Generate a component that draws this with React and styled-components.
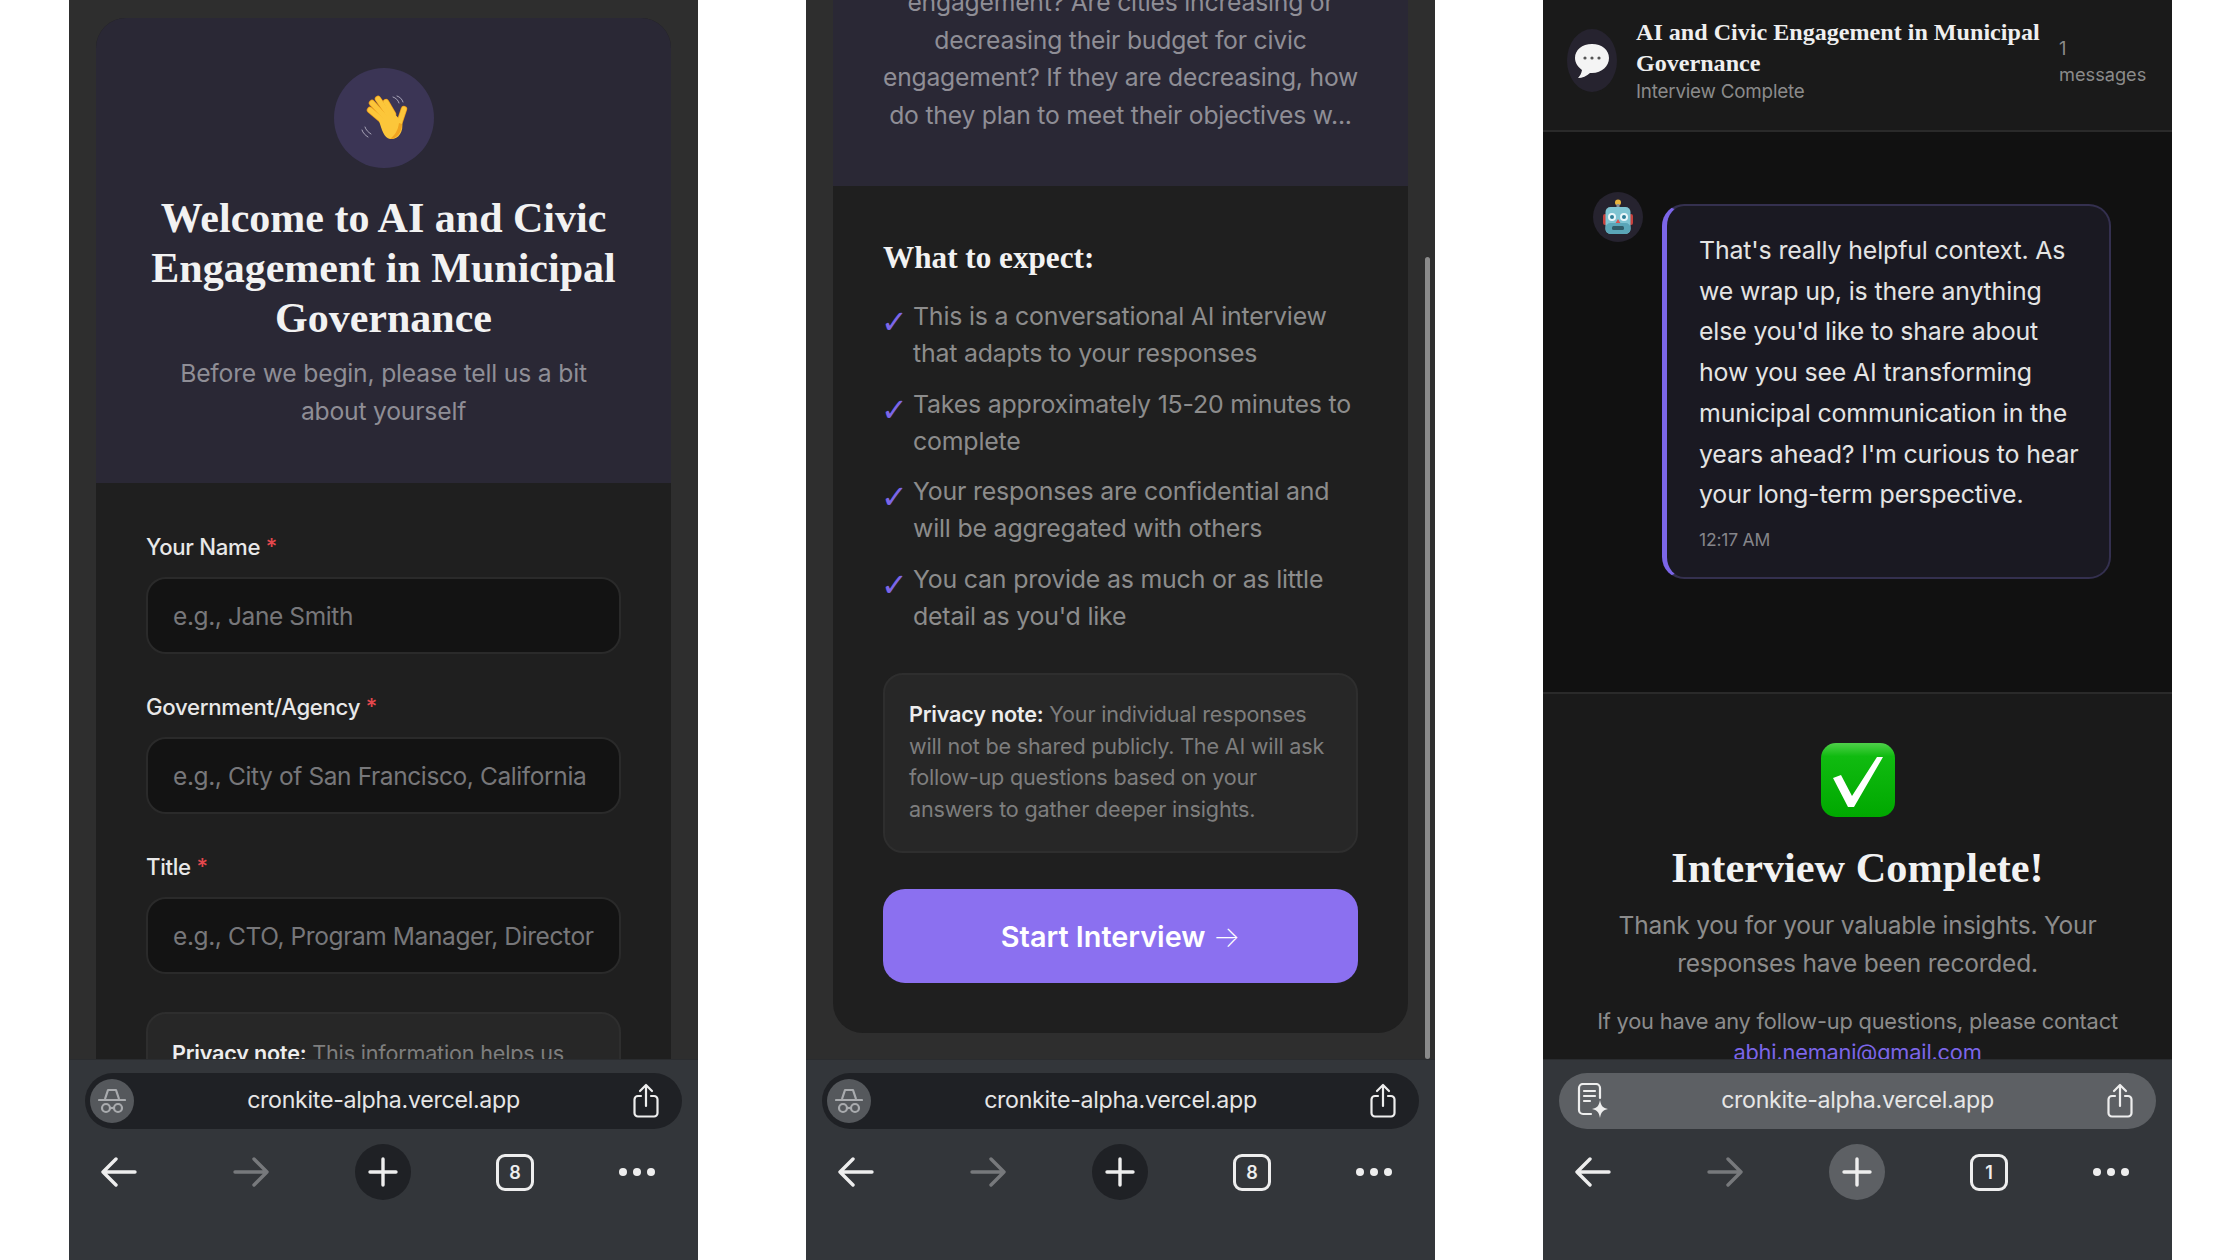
import React from 'react'
import styled, { createGlobalStyle } from 'styled-components'

const GlobalStyle = createGlobalStyle`
html, body {
  margin: 0;
  padding: 0;
  background: #ffffff;
}
* {
  box-sizing: border-box;
}
`

const sans = `Inter, "Noto Sans", sans-serif`
const serif = `"Liberation Serif", "DejaVu Serif", serif`

const Page = styled.div`
display: flex;
gap: 108px;
width: 2240px;
height: 1260px;
padding: 0 68px 0 69px;
overflow: hidden;
background: #ffffff;
font-family: ${sans};
`

const Phone = styled.div`
position: relative;
display: flex;
flex-direction: column;
width: 629px;
height: 1260px;
background: #33363a;
`

const Viewport = styled.div`
display: flex;
flex-direction: column;
flex: none;
height: 1059px;
overflow: hidden;
background: ${({ bg }) => bg || '#2e2e2e'};
justify-content: ${({ bottom }) => (bottom ? 'flex-end' : 'flex-start')};
padding: ${({ pad }) => pad || 0};
`

const Card = styled.div`
flex: none;
margin: 0 27px;
border-radius: ${({ openTop }) => (openTop ? '0 0 30px 30px' : '30px 30px 0 0')};
overflow: hidden;
background: #1f1f1f;
`

const CardHead = styled.div`
display: flex;
flex-direction: column;
align-items: center;
padding: ${({ pad }) => pad || '50px 0 53px'};
background: #2a2835;
text-align: center;
`

const WaveCircle = styled.div`
display: flex;
align-items: center;
justify-content: center;
width: 100px;
height: 100px;
margin-bottom: 25px;
padding-left: 4px;
border-radius: 50%;
background: #3b3555;
`

const Heading = styled.h1`
margin: 0 0 12px;
font-family: ${serif};
font-size: 42px;
line-height: 50px;
font-weight: 700;
color: #f2f2f2;
`

const Lead = styled.p`
margin: 0;
font-size: 24.7px;
line-height: 37.5px;
font-weight: 400;
letter-spacing: -0.2px;
color: #8f8e96;
white-space: nowrap;
`

const CardBody = styled.div`
padding: ${({ pad }) => pad || '49px 50px 0'};
`

const Label = styled.label`
display: block;
margin-bottom: 15px;
font-size: 22.2px;
line-height: 30px;
font-weight: 500;
letter-spacing: -0.3px;
color: #e8e8e8;
`

const Required = styled.span`
color: #e5484d;
`

const Field = styled.div`
margin-bottom: 38px;
`

const Input = styled.input`
display: block;
width: 100%;
height: 77px;
padding: 0 25px;
border: 2px solid #2a2a2a;
border-radius: 20px;
background: #131313;
font-family: ${sans};
font-size: 24.5px;
letter-spacing: -0.4px;
color: #e8e8e8;
outline: none;

&::placeholder {
  color: #77777a;
  opacity: 1;
}
`

const Note = styled.div`
padding: 24px 24px 26px;
border: 2px solid #2e2e2e;
border-radius: 20px;
background: #272727;
font-size: 21.6px;
line-height: 31.4px;
letter-spacing: -0.2px;
color: #7e7e7e;
white-space: nowrap;

b {
  font-weight: 600;
  color: #ededed;
}
`

const ExpectTitle = styled.h2`
margin: 0 0 22px;
font-family: ${serif};
font-size: 31.2px;
line-height: 36px;
font-weight: 700;
color: #f2f2f2;
`

const ExpectList = styled.ul`
display: flex;
flex-direction: column;
gap: 13px;
margin: 0 0 38px;
padding: 0;
list-style: none;
`

const ExpectItem = styled.li`
display: flex;
gap: 12px;
font-size: 24.9px;
line-height: 37.3px;
letter-spacing: -0.2px;
color: #8c8c8c;
white-space: nowrap;
`

const Tick = styled.span`
width: 18px;
flex: none;
padding-top: 6px;
margin-left: -2px;
margin-right: 2px;
font-family: "DejaVu Sans", sans-serif;
font-size: 32px;
line-height: 37.3px;
color: #7c66e8;
`

const StartButton = styled.button`
display: block;
width: 100%;
height: 94px;
margin-top: 36px;
border: none;
border-radius: 22px;
background: #8b70f0;
font-family: ${sans};
font-size: 28.8px;
font-weight: 600;
color: #ffffff;
`

const ThinArrow = styled.span`
font-weight: 200;
`

const ScrollThumb = styled.div`
position: absolute;
top: 257px;
left: 619px;
width: 5px;
height: 802px;
border-radius: 3px;
background: #8a8a8a;
`

const ChatHeader = styled.div`
display: flex;
flex: none;
align-items: center;
gap: 19px;
height: 132px;
padding: 0 25px 9px 24px;
border-bottom: 2px solid #2a2a2a;
background: #1a1a1a;
`

const HeaderAvatar = styled.div`
display: flex;
flex: none;
align-items: center;
justify-content: center;
width: 50px;
height: 63px;
border-radius: 50%;
background: #26232f;
`

const HeaderText = styled.div`
flex: 1;
min-width: 0;
`

const ChatTitle = styled.div`
font-family: ${serif};
font-size: 24.1px;
line-height: 31px;
font-weight: 700;
color: #efefef;
white-space: nowrap;
`

const ChatStatus = styled.div`
font-size: 18.8px;
line-height: 26px;
letter-spacing: -0.2px;
color: #8b8b8b;
`

const MessageCount = styled.div`
flex: none;
width: 88px;
font-size: 18.2px;
line-height: 26px;
color: #8b8b8b;
`

const Messages = styled.div`
display: flex;
flex: none;
align-items: flex-start;
gap: 19px;
height: 560px;
padding: 60px 0 0 50px;
background: #111111;
`

const BotAvatar = styled.div`
display: flex;
flex: none;
align-items: center;
justify-content: center;
width: 50px;
height: 50px;
border-radius: 50%;
background: #26232f;
`

const Bubble = styled.div`
width: 449px;
margin-top: 12px;
padding: 24px 18px 24px 32px;
border: 2px solid #34304f;
border-left: 5px solid #7c66e8;
border-radius: 22px;
background: #1a1922;
font-size: 24.9px;
line-height: 40.7px;
letter-spacing: -0.15px;
color: #e4e4e4;
white-space: nowrap;
`

const Time = styled.div`
margin-top: 12px;
font-size: 17.5px;
line-height: 26px;
letter-spacing: -0.2px;
color: #85858a;
`

const Done = styled.div`
display: flex;
flex: none;
flex-direction: column;
align-items: center;
padding-top: 49px;
border-top: 2px solid #2a2a2a;
background: #1a1a1a;
text-align: center;
`

const DoneTitle = styled.h2`
margin: 27px 0 14px;
font-family: ${serif};
font-size: 42.3px;
line-height: 48px;
font-weight: 700;
color: #f2f2f2;
`

const DoneText = styled.p`
margin: 0 0 24px;
font-size: 24.5px;
line-height: 38px;
letter-spacing: -0.2px;
color: #8c8c8c;
white-space: nowrap;
`

const Contact = styled.p`
margin: 0;
font-size: 21.8px;
line-height: 31px;
letter-spacing: -0.2px;
color: #8c8c8c;
white-space: nowrap;
`

const Email = styled.a`
color: #7c66e8;
`

const ChromeBar = styled.div`
display: flex;
flex: 1;
flex-direction: column;
padding: 13px 16px 0;
border-top: 1px solid #2a2c2f;
`

const UrlBar = styled.div`
display: grid;
grid-template-columns: ${({ light }) => (light ? '65px' : '78px')} 1fr 60px;
align-items: center;
height: 56px;
padding: ${({ light }) => (light ? '0 23px 0 18px' : '0 23px 0 5px')};
border-radius: 28px;
background: ${({ light }) => (light ? '#5d6064' : '#1f2125')};

& > :first-child {
  justify-self: start;
}
& > :last-child {
  justify-self: end;
}
`

const UrlText = styled.div`
padding-bottom: 3px;
font-size: 23.2px;
letter-spacing: -0.3px;
text-align: center;
color: #e6e6e6;
`

const Incognito = styled.div`
display: flex;
align-items: center;
justify-content: center;
width: 44px;
height: 44px;
border-radius: 50%;
background: #55585c;
`

const NavRow = styled.div`
display: grid;
grid-template-columns: repeat(4, 132px) 112px;
align-items: center;
justify-items: center;
height: 56px;
margin: 15px 0 0 -32px;
`

const PlusCircle = styled.div`
display: flex;
align-items: center;
justify-content: center;
width: 56px;
height: 56px;
border-radius: 50%;
background: ${({ light }) => (light ? '#5d6064' : '#1f2125')};
`

const TabBox = styled.div`
display: flex;
align-items: center;
justify-content: center;
width: 38px;
height: 37px;
border: 3px solid #eeeeee;
border-radius: 9px;
font-size: 18px;
font-weight: 600;
color: #eeeeee;
`

const HandIcon = () => (
  <svg width="50" height="48" viewBox="0 0 50 48">
    <g stroke="#a8a4b8" strokeWidth="1" fill="none" strokeLinecap="round">
      <path d="M32 3c3 1 5 3 6 6" />
      <path d="M36 2c3 1 5 3 6 6" />
      <path d="M4 33c1 3 3 5 6 7" />
      <path d="M1 36c1 3 3 5 6 7" />
    </g>
    <g stroke="#e8981c" strokeLinecap="round" fill="none">
      <path d="M22 27 L9 16" strokeWidth="6.4" />
      <path d="M24 23 L11 9" strokeWidth="6.4" />
      <path d="M28 21 L17 5" strokeWidth="6.4" />
      <path d="M32 20 L25 8" strokeWidth="6.4" />
      <path d="M38 30 L43 15" strokeWidth="6.4" />
    </g>
    <g stroke="#fcc63a" strokeLinecap="round" fill="none">
      <path d="M22 27 L9 16" strokeWidth="5" />
      <path d="M24 23 L11 9" strokeWidth="5" />
      <path d="M28 21 L17 5" strokeWidth="5" />
      <path d="M32 20 L25 8" strokeWidth="5" />
      <path d="M38 30 L43 15" strokeWidth="5" />
    </g>
    <path d="M18 27 L32 18 L41 28 C43 38 37 46 29 45 C23 44 21 36 18 27 Z" fill="#fcc63a" />
    <path d="M41 30 C41 38 36 45 29 45 C33 42 37 37 38 29 Z" fill="#f0a31f" />
  </svg>
)

const SpeechIcon = () => (
  <svg width="36" height="38" viewBox="0 0 36 38">
    <path d="M18 2C8 2 1 8 1 16c0 5 3 9 7 12-.5 3-2 6-4 8 4 0 9-2 12-5h2c10 0 17-7 17-15S28 2 18 2Z" fill="#f4f4f4" />
    <circle cx="11" cy="16" r="1.6" fill="#555" />
    <circle cx="18" cy="16" r="1.6" fill="#555" />
    <circle cx="25" cy="16" r="1.6" fill="#555" />
  </svg>
)

const RobotIcon = () => (
  <svg width="30" height="36" viewBox="0 0 30 36">
    <circle cx="15" cy="3.5" r="3" fill="#e8b33c" />
    <rect x="13.5" y="5" width="3" height="4" fill="#8a8f96" />
    <rect x="0" y="15" width="4" height="11" rx="2" fill="#c8403c" />
    <rect x="26" y="15" width="4" height="11" rx="2" fill="#c8403c" />
    <rect x="2.5" y="8" width="25" height="27" rx="5" fill="#7fc4d2" />
    <rect x="2.5" y="24" width="25" height="11" rx="5" fill="#5aa6b8" />
    <circle cx="9" cy="18" r="4" fill="#e8f6fa" />
    <circle cx="21" cy="18" r="4" fill="#e8f6fa" />
    <circle cx="9" cy="18" r="2" fill="#2d7e96" />
    <circle cx="21" cy="18" r="2" fill="#2d7e96" />
    <path d="M15 20l2.4 4h-4.8Z" fill="#d9534f" />
    <rect x="9" y="27" width="12" height="4" rx="1.5" fill="#2f5c68" />
  </svg>
)

const CheckBox = () => (
  <svg width="74" height="74" viewBox="0 0 74 74">
    <defs>
      <linearGradient id="greenBox" x1="0" y1="0" x2="0" y2="1">
        <stop offset="0" stopColor="#4fd04a" />
        <stop offset="0.18" stopColor="#10bb10" />
        <stop offset="1" stopColor="#00a800" />
      </linearGradient>
    </defs>
    <rect width="74" height="74" rx="15" fill="url(#greenBox)" />
    <path d="M12 35 L20 32 L31 53 L56 14 L62 14 L33 64 L27 64 Z" fill="#ffffff" />
  </svg>
)

const IncognitoIcon = () => (
  <svg width="28" height="28" viewBox="0 0 28 28" fill="none" stroke="#a9abae" strokeWidth="2.2">
    <path d="M7 12 L10 3 H18 L21 12" strokeLinejoin="round" />
    <path d="M1 13 H27" strokeLinecap="round" />
    <circle cx="8" cy="21" r="4" />
    <circle cx="20" cy="21" r="4" />
    <path d="M12 21 H16" />
  </svg>
)

const DocSparkIcon = () => (
  <svg width="32" height="36" viewBox="0 0 32 36" fill="none" stroke="#eeeeee" strokeWidth="2.2">
    <path d="M14 31 H6 a4 4 0 0 1-4-4 V5 a4 4 0 0 1 4-4 H19 a4 4 0 0 1 4 4 V15" strokeLinecap="round" />
    <path d="M7 8 H18 M7 13 H18 M7 18 H13" strokeLinecap="round" />
    <path d="M23 17 C24 23 26 25 31 26 C26 27 24 29 23 35 C22 29 20 27 15 26 C20 25 22 23 23 17 Z" fill="#eeeeee" stroke="none" />
  </svg>
)

const ShareIcon = () => (
  <svg width="26" height="36" viewBox="0 0 26 36" fill="none" stroke="#eeeeee" strokeWidth="2.2" strokeLinecap="round" strokeLinejoin="round">
    <path d="M8 13 H5 a3.5 3.5 0 0 0-3.5 3.5 V30 a3.5 3.5 0 0 0 3.5 3.5 H21 a3.5 3.5 0 0 0 3.5-3.5 V16.5 A3.5 3.5 0 0 0 21 13 H18" />
    <path d="M13 23 V2 M7 8 L13 2 L19 8" />
  </svg>
)

const ArrowIcon = ({ back, dim }) => (
  <svg width="36" height="30" viewBox="0 0 36 30" fill="none" stroke={dim ? '#77797c' : '#eeeeee'} strokeWidth="3.4" strokeLinecap="round" strokeLinejoin="round">
    {back
      ? <path d="M34 15 H2 M15 2 L2 15 L15 28" />
      : <path d="M2 15 H34 M21 2 L34 15 L21 28" />}
  </svg>
)

const PlusIcon = () => (
  <svg width="30" height="30" viewBox="0 0 30 30" stroke="#eeeeee" strokeWidth="3.4" strokeLinecap="round">
    <path d="M15 2 V28 M2 15 H28" />
  </svg>
)

const DotsIcon = () => (
  <svg width="36" height="10" viewBox="0 0 36 10" fill="#eeeeee">
    <circle cx="4" cy="5" r="4" />
    <circle cx="18" cy="5" r="4" />
    <circle cx="32" cy="5" r="4" />
  </svg>
)

const Chrome = ({ light, tabs }) => (
  <ChromeBar>
    <UrlBar light={light}>
      {light ? <DocSparkIcon /> : <Incognito><IncognitoIcon /></Incognito>}
      <UrlText>cronkite-alpha.vercel.app</UrlText>
      <ShareIcon />
    </UrlBar>
    <NavRow>
      <ArrowIcon back />
      <ArrowIcon dim />
      <PlusCircle light={light}><PlusIcon /></PlusCircle>
      <TabBox>{tabs}</TabBox>
      <DotsIcon />
    </NavRow>
  </ChromeBar>
)

const fields = [
  { label: 'Your Name', placeholder: 'e.g., Jane Smith' },
  { label: 'Government/Agency', placeholder: 'e.g., City of San Francisco, California' },
  { label: 'Title', placeholder: 'e.g., CTO, Program Manager, Director' }
]

const expectations = [
  ['This is a conversational AI interview', 'that adapts to your responses'],
  ['Takes approximately 15-20 minutes to', 'complete'],
  ['Your responses are confidential and', 'will be aggregated with others'],
  ['You can provide as much or as little', "detail as you'd like"]
]

const Lines = ({ lines }) => lines.map((line, i) => (
  <React.Fragment key={line}>{i > 0 && <br />}{line}</React.Fragment>
))

const App = () => (
  <Page>
    <GlobalStyle />

    <Phone>
      <Viewport pad="18px 0 0">
        <Card>
          <CardHead>
            <WaveCircle><HandIcon /></WaveCircle>
            <Heading>Welcome to AI and Civic<br />Engagement in Municipal<br />Governance</Heading>
            <Lead>Before we begin, please tell us a bit<br />about yourself</Lead>
          </CardHead>
          <CardBody>
            {fields.map(field => (
              <Field key={field.label}>
                <Label>{field.label} <Required>*</Required></Label>
                <Input placeholder={field.placeholder} />
              </Field>
            ))}
            <Note><b>Privacy note:</b> This information helps us</Note>
          </CardBody>
        </Card>
      </Viewport>
      <Chrome tabs="8" />
    </Phone>

    <Phone>
      <Viewport bottom pad="0 0 26px">
        <Card openTop>
          <CardHead pad="0 0 52px">
            <Lead>
              engagement? Are cities increasing or<br />
              decreasing their budget for civic<br />
              engagement? If they are decreasing, how<br />
              do they plan to meet their objectives w...
            </Lead>
          </CardHead>
          <CardBody pad="54px 50px 50px">
            <ExpectTitle>What to expect:</ExpectTitle>
            <ExpectList>
              {expectations.map(lines => (
                <ExpectItem key={lines[0]}>
                  <Tick>✓</Tick>
                  <div><Lines lines={lines} /></div>
                </ExpectItem>
              ))}
            </ExpectList>
            <Note>
              <b>Privacy note:</b> Your individual responses<br />
              will not be shared publicly. The AI will ask<br />
              follow-up questions based on your<br />
              answers to gather deeper insights.
            </Note>
            <StartButton>Start Interview <ThinArrow>→</ThinArrow></StartButton>
          </CardBody>
        </Card>
      </Viewport>
      <ScrollThumb />
      <Chrome tabs="8" />
    </Phone>

    <Phone>
      <Viewport bg="#1a1a1a">
        <ChatHeader>
          <HeaderAvatar><SpeechIcon /></HeaderAvatar>
          <HeaderText>
            <ChatTitle>AI and Civic Engagement in Municipal<br />Governance</ChatTitle>
            <ChatStatus>Interview Complete</ChatStatus>
          </HeaderText>
          <MessageCount>1<br />messages</MessageCount>
        </ChatHeader>
        <Messages>
          <BotAvatar><RobotIcon /></BotAvatar>
          <Bubble>
            That's really helpful context. As<br />
            we wrap up, is there anything<br />
            else you'd like to share about<br />
            how you see AI transforming<br />
            municipal communication in the<br />
            years ahead? I'm curious to hear<br />
            your long-term perspective.
            <Time>12:17 AM</Time>
          </Bubble>
        </Messages>
        <Done>
          <CheckBox />
          <DoneTitle>Interview Complete!</DoneTitle>
          <DoneText>Thank you for your valuable insights. Your<br />responses have been recorded.</DoneText>
          <Contact>If you have any follow-up questions, please contact<br /><Email>abhi.nemani@gmail.com</Email></Contact>
        </Done>
      </Viewport>
      <Chrome light tabs="1" />
    </Phone>
  </Page>
)

export default App
